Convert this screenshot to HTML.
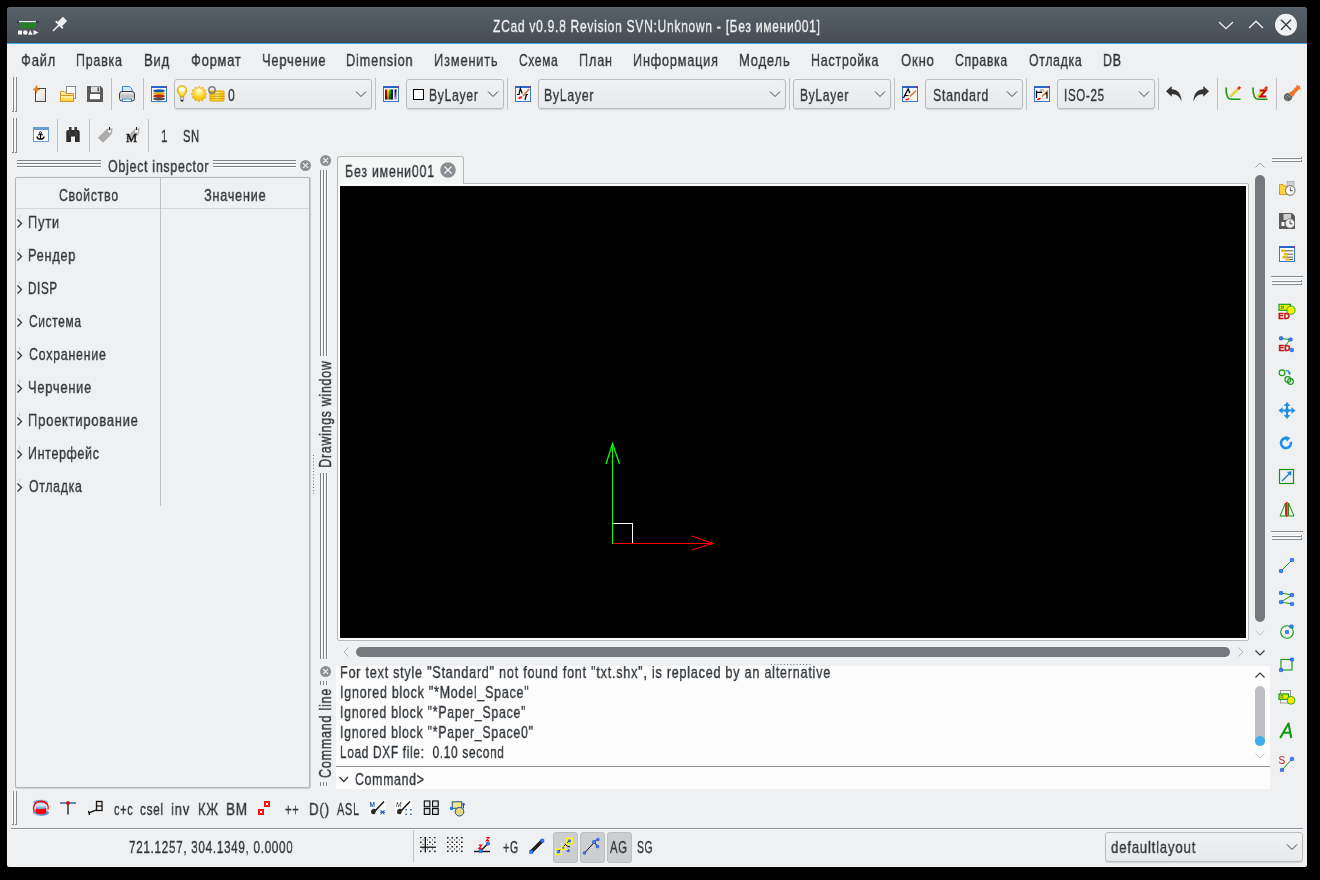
<!DOCTYPE html>
<html><head><meta charset="utf-8"><style>
html,body{margin:0;padding:0;background:#000;width:1320px;height:880px;overflow:hidden;position:relative}
.t{position:absolute;white-space:pre;font-family:"Liberation Sans",sans-serif;transform-origin:0 0;will-change:transform;-webkit-text-stroke:0.35px currentColor;letter-spacing:1px}
svg{overflow:visible;will-change:transform}
</style></head><body>
<div style="position:absolute;left:7px;top:7px;width:1300px;height:860px;background:#eff0f1;border-radius:4px 4px 2px 2px;"></div>
<div style="position:absolute;left:7px;top:7px;width:1300px;height:35px;background:#555e66;border-radius:4px 4px 0 0;"></div>
<div style="position:absolute;left:9px;top:7px;width:1296px;height:1px;background:#5c666d;"></div>
<div style="position:absolute;left:8px;top:8px;width:1298px;height:1px;background:#565f67;"></div>
<div style="position:absolute;left:8px;top:9px;width:1298px;height:1px;background:#565e66;"></div>
<div style="position:absolute;left:7px;top:10px;width:1300px;height:1px;background:#555e66;"></div>
<div style="position:absolute;left:7px;top:11px;width:1300px;height:1px;background:#555d65;"></div>
<div style="position:absolute;left:7px;top:12px;width:1300px;height:1px;background:#545d65;"></div>
<div style="position:absolute;left:7px;top:13px;width:1300px;height:1px;background:#545c64;"></div>
<div style="position:absolute;left:7px;top:14px;width:1300px;height:1px;background:#535c64;"></div>
<div style="position:absolute;left:7px;top:15px;width:1300px;height:1px;background:#535b63;"></div>
<div style="position:absolute;left:7px;top:16px;width:1300px;height:1px;background:#535b63;"></div>
<div style="position:absolute;left:7px;top:17px;width:1300px;height:1px;background:#525a62;"></div>
<div style="position:absolute;left:7px;top:18px;width:1300px;height:1px;background:#525a62;"></div>
<div style="position:absolute;left:7px;top:19px;width:1300px;height:1px;background:#515961;"></div>
<div style="position:absolute;left:7px;top:20px;width:1300px;height:1px;background:#515960;"></div>
<div style="position:absolute;left:7px;top:21px;width:1300px;height:1px;background:#505860;"></div>
<div style="position:absolute;left:7px;top:22px;width:1300px;height:1px;background:#50585f;"></div>
<div style="position:absolute;left:7px;top:23px;width:1300px;height:1px;background:#50575f;"></div>
<div style="position:absolute;left:7px;top:24px;width:1300px;height:1px;background:#4f575e;"></div>
<div style="position:absolute;left:7px;top:25px;width:1300px;height:1px;background:#4f565e;"></div>
<div style="position:absolute;left:7px;top:26px;width:1300px;height:1px;background:#4e565d;"></div>
<div style="position:absolute;left:7px;top:27px;width:1300px;height:1px;background:#4e555d;"></div>
<div style="position:absolute;left:7px;top:28px;width:1300px;height:1px;background:#4e555c;"></div>
<div style="position:absolute;left:7px;top:29px;width:1300px;height:1px;background:#4d545c;"></div>
<div style="position:absolute;left:7px;top:30px;width:1300px;height:1px;background:#4d545b;"></div>
<div style="position:absolute;left:7px;top:31px;width:1300px;height:1px;background:#4c535a;"></div>
<div style="position:absolute;left:7px;top:32px;width:1300px;height:1px;background:#4c535a;"></div>
<div style="position:absolute;left:7px;top:33px;width:1300px;height:1px;background:#4b5259;"></div>
<div style="position:absolute;left:7px;top:34px;width:1300px;height:1px;background:#4b5259;"></div>
<div style="position:absolute;left:7px;top:35px;width:1300px;height:1px;background:#4b5158;"></div>
<div style="position:absolute;left:7px;top:36px;width:1300px;height:1px;background:#4a5158;"></div>
<div style="position:absolute;left:7px;top:37px;width:1300px;height:1px;background:#4a5057;"></div>
<div style="position:absolute;left:7px;top:38px;width:1300px;height:1px;background:#495057;"></div>
<div style="position:absolute;left:7px;top:39px;width:1300px;height:1px;background:#494f56;"></div>
<div style="position:absolute;left:7px;top:40px;width:1300px;height:1px;background:#484f56;"></div>
<div style="position:absolute;left:7px;top:41px;width:1300px;height:1px;background:#484e55;"></div>
<div style="position:absolute;left:7px;top:42px;width:1300px;height:1px;background:#46494e;"></div>
<div style="position:absolute;left:7px;top:43px;width:1300px;height:1px;background:#3daee9;"></div>
<div style="position:absolute;left:12px;top:77px;width:1px;height:35px;background:#fcfcfc;"></div>
<div style="position:absolute;left:13px;top:77px;width:1px;height:35px;background:#868b90;"></div>
<div style="position:absolute;left:12px;top:111px;width:2px;height:1px;background:#868b90;"></div>
<div style="position:absolute;left:15px;top:77px;width:1px;height:35px;background:#fcfcfc;"></div>
<div style="position:absolute;left:16px;top:77px;width:1px;height:35px;background:#868b90;"></div>
<div style="position:absolute;left:15px;top:111px;width:2px;height:1px;background:#868b90;"></div>
<div style="position:absolute;left:111px;top:78px;width:1px;height:32px;background:#bfc1c3;"></div>
<div style="position:absolute;left:143px;top:78px;width:1px;height:32px;background:#bfc1c3;"></div>
<div style="position:absolute;left:174px;top:79px;width:198px;height:30px;box-sizing:border-box;border:1px solid #babcbe;border-radius:3px;background:linear-gradient(#f0f1f2,#e8e9ea);box-shadow:0 1px 1px rgba(0,0,0,0.12);"></div>
<svg style="position:absolute;left:355px;top:90px;" width="12" height="8" viewBox="0 0 12 8"><polyline points="1,1.5 6,6.5 11,1.5" fill="none" stroke="#3b4045" stroke-width="1"/></svg>
<div style="position:absolute;left:375px;top:78px;width:1px;height:32px;background:#bfc1c3;"></div>
<div style="position:absolute;left:406px;top:79px;width:98px;height:30px;box-sizing:border-box;border:1px solid #babcbe;border-radius:3px;background:linear-gradient(#f0f1f2,#e8e9ea);box-shadow:0 1px 1px rgba(0,0,0,0.12);"></div>
<svg style="position:absolute;left:487px;top:90px;" width="12" height="8" viewBox="0 0 12 8"><polyline points="1,1.5 6,6.5 11,1.5" fill="none" stroke="#3b4045" stroke-width="1"/></svg>
<div style="position:absolute;left:507px;top:78px;width:1px;height:32px;background:#bfc1c3;"></div>
<div style="position:absolute;left:538px;top:79px;width:248px;height:30px;box-sizing:border-box;border:1px solid #babcbe;border-radius:3px;background:linear-gradient(#f0f1f2,#e8e9ea);box-shadow:0 1px 1px rgba(0,0,0,0.12);"></div>
<svg style="position:absolute;left:769px;top:90px;" width="12" height="8" viewBox="0 0 12 8"><polyline points="1,1.5 6,6.5 11,1.5" fill="none" stroke="#3b4045" stroke-width="1"/></svg>
<div style="position:absolute;left:789px;top:78px;width:1px;height:32px;background:#bfc1c3;"></div>
<div style="position:absolute;left:793px;top:79px;width:98px;height:30px;box-sizing:border-box;border:1px solid #babcbe;border-radius:3px;background:linear-gradient(#f0f1f2,#e8e9ea);box-shadow:0 1px 1px rgba(0,0,0,0.12);"></div>
<svg style="position:absolute;left:874px;top:90px;" width="12" height="8" viewBox="0 0 12 8"><polyline points="1,1.5 6,6.5 11,1.5" fill="none" stroke="#3b4045" stroke-width="1"/></svg>
<div style="position:absolute;left:894px;top:78px;width:1px;height:32px;background:#bfc1c3;"></div>
<div style="position:absolute;left:925px;top:79px;width:98px;height:30px;box-sizing:border-box;border:1px solid #babcbe;border-radius:3px;background:linear-gradient(#f0f1f2,#e8e9ea);box-shadow:0 1px 1px rgba(0,0,0,0.12);"></div>
<svg style="position:absolute;left:1006px;top:90px;" width="12" height="8" viewBox="0 0 12 8"><polyline points="1,1.5 6,6.5 11,1.5" fill="none" stroke="#3b4045" stroke-width="1"/></svg>
<div style="position:absolute;left:1026px;top:78px;width:1px;height:32px;background:#bfc1c3;"></div>
<div style="position:absolute;left:1057px;top:79px;width:98px;height:30px;box-sizing:border-box;border:1px solid #babcbe;border-radius:3px;background:linear-gradient(#f0f1f2,#e8e9ea);box-shadow:0 1px 1px rgba(0,0,0,0.12);"></div>
<svg style="position:absolute;left:1138px;top:90px;" width="12" height="8" viewBox="0 0 12 8"><polyline points="1,1.5 6,6.5 11,1.5" fill="none" stroke="#3b4045" stroke-width="1"/></svg>
<div style="position:absolute;left:1158px;top:78px;width:1px;height:32px;background:#bfc1c3;"></div>
<div style="position:absolute;left:1217px;top:78px;width:1px;height:32px;background:#bfc1c3;"></div>
<div style="position:absolute;left:1276px;top:78px;width:1px;height:32px;background:#bfc1c3;"></div>
<div style="position:absolute;left:413px;top:89px;width:11px;height:11px;box-sizing:border-box;border:1.5px solid #000;background:#fff;"></div>
<div style="position:absolute;left:12px;top:118px;width:1px;height:35px;background:#fcfcfc;"></div>
<div style="position:absolute;left:13px;top:118px;width:1px;height:35px;background:#868b90;"></div>
<div style="position:absolute;left:12px;top:152px;width:2px;height:1px;background:#868b90;"></div>
<div style="position:absolute;left:15px;top:118px;width:1px;height:35px;background:#fcfcfc;"></div>
<div style="position:absolute;left:16px;top:118px;width:1px;height:35px;background:#868b90;"></div>
<div style="position:absolute;left:15px;top:152px;width:2px;height:1px;background:#868b90;"></div>
<div style="position:absolute;left:57px;top:119px;width:1px;height:33px;background:#bfc1c3;"></div>
<div style="position:absolute;left:89px;top:119px;width:1px;height:33px;background:#bfc1c3;"></div>
<div style="position:absolute;left:148px;top:119px;width:1px;height:33px;background:#bfc1c3;"></div>
<div style="position:absolute;left:17px;top:160px;width:84px;height:1px;background:#7e848a;"></div>
<div style="position:absolute;left:17px;top:161px;width:84px;height:1px;background:#fcfcfc;"></div>
<div style="position:absolute;left:17px;top:163px;width:84px;height:1px;background:#7e848a;"></div>
<div style="position:absolute;left:17px;top:164px;width:84px;height:1px;background:#fcfcfc;"></div>
<div style="position:absolute;left:17px;top:166px;width:84px;height:1px;background:#7e848a;"></div>
<div style="position:absolute;left:17px;top:167px;width:84px;height:1px;background:#fcfcfc;"></div>
<div style="position:absolute;left:213px;top:160px;width:83px;height:1px;background:#7e848a;"></div>
<div style="position:absolute;left:213px;top:161px;width:83px;height:1px;background:#fcfcfc;"></div>
<div style="position:absolute;left:213px;top:163px;width:83px;height:1px;background:#7e848a;"></div>
<div style="position:absolute;left:213px;top:164px;width:83px;height:1px;background:#fcfcfc;"></div>
<div style="position:absolute;left:213px;top:166px;width:83px;height:1px;background:#7e848a;"></div>
<div style="position:absolute;left:213px;top:167px;width:83px;height:1px;background:#fcfcfc;"></div>
<svg style="position:absolute;left:299px;top:159px;" width="14" height="14" viewBox="0 0 14 14"><g transform="translate(6.5,6.5)"><circle r="5.5" fill="#8e9194"/><path d="M-2.475,-2.475L2.475,2.475M2.475,-2.475L-2.475,2.475" stroke="#f4f5f5" stroke-width="1.1"/></g></svg>
<div style="position:absolute;left:15px;top:177px;width:295px;height:611px;box-sizing:border-box;border:1px solid #b3b5b7;border-radius:2px;background:#eff0f1;box-shadow:0.5px 0.5px 1px rgba(0,0,0,0.15);"></div>
<div style="position:absolute;left:16px;top:208px;width:293px;height:1px;background:#d5d7d9;"></div>
<div style="position:absolute;left:160px;top:178px;width:1px;height:328px;background:#bfc1c3;"></div>
<svg style="position:absolute;left:16px;top:217px;" width="8" height="12" viewBox="0 0 8 12"><polyline points="1.5,2.5 5.5,6.5 1.5,10.5" fill="none" stroke="#31363b" stroke-width="1.3"/></svg>
<div style="position:absolute;left:19px;top:215px;width:1px;height:3px;background:#c8cacc;"></div>
<svg style="position:absolute;left:16px;top:250px;" width="8" height="12" viewBox="0 0 8 12"><polyline points="1.5,2.5 5.5,6.5 1.5,10.5" fill="none" stroke="#31363b" stroke-width="1.3"/></svg>
<div style="position:absolute;left:19px;top:248px;width:1px;height:3px;background:#c8cacc;"></div>
<svg style="position:absolute;left:16px;top:283px;" width="8" height="12" viewBox="0 0 8 12"><polyline points="1.5,2.5 5.5,6.5 1.5,10.5" fill="none" stroke="#31363b" stroke-width="1.3"/></svg>
<div style="position:absolute;left:19px;top:281px;width:1px;height:3px;background:#c8cacc;"></div>
<svg style="position:absolute;left:16px;top:316px;" width="8" height="12" viewBox="0 0 8 12"><polyline points="1.5,2.5 5.5,6.5 1.5,10.5" fill="none" stroke="#31363b" stroke-width="1.3"/></svg>
<div style="position:absolute;left:19px;top:314px;width:1px;height:3px;background:#c8cacc;"></div>
<svg style="position:absolute;left:16px;top:349px;" width="8" height="12" viewBox="0 0 8 12"><polyline points="1.5,2.5 5.5,6.5 1.5,10.5" fill="none" stroke="#31363b" stroke-width="1.3"/></svg>
<div style="position:absolute;left:19px;top:347px;width:1px;height:3px;background:#c8cacc;"></div>
<svg style="position:absolute;left:16px;top:382px;" width="8" height="12" viewBox="0 0 8 12"><polyline points="1.5,2.5 5.5,6.5 1.5,10.5" fill="none" stroke="#31363b" stroke-width="1.3"/></svg>
<div style="position:absolute;left:19px;top:380px;width:1px;height:3px;background:#c8cacc;"></div>
<svg style="position:absolute;left:16px;top:415px;" width="8" height="12" viewBox="0 0 8 12"><polyline points="1.5,2.5 5.5,6.5 1.5,10.5" fill="none" stroke="#31363b" stroke-width="1.3"/></svg>
<div style="position:absolute;left:19px;top:413px;width:1px;height:3px;background:#c8cacc;"></div>
<svg style="position:absolute;left:16px;top:448px;" width="8" height="12" viewBox="0 0 8 12"><polyline points="1.5,2.5 5.5,6.5 1.5,10.5" fill="none" stroke="#31363b" stroke-width="1.3"/></svg>
<div style="position:absolute;left:19px;top:446px;width:1px;height:3px;background:#c8cacc;"></div>
<svg style="position:absolute;left:16px;top:481px;" width="8" height="12" viewBox="0 0 8 12"><polyline points="1.5,2.5 5.5,6.5 1.5,10.5" fill="none" stroke="#31363b" stroke-width="1.3"/></svg>
<div style="position:absolute;left:19px;top:479px;width:1px;height:3px;background:#c8cacc;"></div>
<svg style="position:absolute;left:319px;top:154px;" width="14" height="14" viewBox="0 0 14 14"><g transform="translate(6.600000000000023,6.5)"><circle r="5.5" fill="#8e9194"/><path d="M-2.475,-2.475L2.475,2.475M2.475,-2.475L-2.475,2.475" stroke="#f4f5f5" stroke-width="1.1"/></g></svg>
<div style="position:absolute;left:320px;top:170px;width:1px;height:186px;background:#7e848a;"></div>
<div style="position:absolute;left:321px;top:170px;width:1px;height:186px;background:#fcfcfc;"></div>
<div style="position:absolute;left:323px;top:170px;width:1px;height:186px;background:#7e848a;"></div>
<div style="position:absolute;left:324px;top:170px;width:1px;height:186px;background:#fcfcfc;"></div>
<div style="position:absolute;left:326px;top:170px;width:1px;height:186px;background:#7e848a;"></div>
<div style="position:absolute;left:327px;top:170px;width:1px;height:186px;background:#fcfcfc;"></div>
<div style="position:absolute;left:320px;top:473px;width:1px;height:186px;background:#7e848a;"></div>
<div style="position:absolute;left:321px;top:473px;width:1px;height:186px;background:#fcfcfc;"></div>
<div style="position:absolute;left:323px;top:473px;width:1px;height:186px;background:#7e848a;"></div>
<div style="position:absolute;left:324px;top:473px;width:1px;height:186px;background:#fcfcfc;"></div>
<div style="position:absolute;left:326px;top:473px;width:1px;height:186px;background:#7e848a;"></div>
<div style="position:absolute;left:327px;top:473px;width:1px;height:186px;background:#fcfcfc;"></div>
<svg style="position:absolute;left:312px;top:455px;" width="3" height="39" viewBox="0 0 3 39"><line x1="1.5" y1="0" x2="1.5" y2="39" stroke="#6d7277" stroke-width="1" stroke-dasharray="1,2.2"/></svg>
<div style="position:absolute;left:337px;top:183px;width:912px;height:458px;box-sizing:border-box;border:1px solid #b6b8ba;border-radius:0 2px 2px 2px;background:#fcfcfc;"></div>
<div style="position:absolute;left:337px;top:156px;width:127px;height:28px;box-sizing:border-box;border:1px solid #b6b8ba;border-bottom:none;border-radius:3px 3px 0 0;background:#f5f6f6;"></div>
<div style="position:absolute;left:340px;top:186px;width:906px;height:452px;background:#000;"></div>
<svg style="position:absolute;left:439px;top:161px;" width="18" height="18" viewBox="0 0 18 18"><g transform="translate(9,9)"><circle r="7.8" fill="#8a8d91"/><path d="M-3.51,-3.51L3.51,3.51M3.51,-3.51L-3.51,3.51" stroke="#f6f6f6" stroke-width="1.1"/></g></svg>
<svg style="position:absolute;left:600px;top:435px;" width="120" height="115" viewBox="0 0 120 115">
<g transform="translate(-600,-435)" fill="none" stroke-width="1.3" shape-rendering="crispEdges">
<line x1="612.5" y1="543.5" x2="612.5" y2="443.5" stroke="#00ff00"/>
<polyline points="606,464 612.5,443.5 619.5,464" stroke="#00ff00" shape-rendering="auto"/>
<line x1="612.5" y1="543.5" x2="712.5" y2="543.5" stroke="#ff0000"/>
<polyline points="692,536 712.5,543.5 692,550" stroke="#ff0000" shape-rendering="auto"/>
<polyline points="612.5,523.5 632.5,523.5 632.5,543" stroke="#ffffff"/>
</g></svg>
<svg style="position:absolute;left:1254px;top:161px;" width="12" height="8" viewBox="0 0 12 8"><polyline points="1.5,6.5 6,2 10.5,6.5" fill="none" stroke="#a3a6a9" stroke-width="1"/></svg>
<div style="position:absolute;left:1255px;top:175px;width:10px;height:447px;background:#75797e;border-radius:5px;"></div>
<svg style="position:absolute;left:1254px;top:629px;" width="12" height="8" viewBox="0 0 12 8"><polyline points="1.5,1.5 6,6 10.5,1.5" fill="none" stroke="#c5c7c9" stroke-width="1"/></svg>
<svg style="position:absolute;left:342px;top:646px;" width="8" height="12" viewBox="0 0 8 12"><polyline points="6.5,1.5 2,6 6.5,10.5" fill="none" stroke="#b3b5b8" stroke-width="1"/></svg>
<div style="position:absolute;left:356px;top:647px;width:874px;height:10px;background:#75797e;border-radius:5px;"></div>
<svg style="position:absolute;left:1237px;top:646px;" width="8" height="12" viewBox="0 0 8 12"><polyline points="1.5,1.5 6,6 1.5,10.5" fill="none" stroke="#b3b5b8" stroke-width="1"/></svg>
<svg style="position:absolute;left:1254px;top:649px;" width="12" height="8" viewBox="0 0 12 8"><polyline points="1.5,1.5 6,6 10.5,1.5" fill="none" stroke="#31363b" stroke-width="1.1"/></svg>
<svg style="position:absolute;left:319px;top:665px;" width="14" height="14" viewBox="0 0 14 14"><g transform="translate(6.600000000000023,6.5)"><circle r="5.5" fill="#8e9194"/><path d="M-2.475,-2.475L2.475,2.475M2.475,-2.475L-2.475,2.475" stroke="#f4f5f5" stroke-width="1.1"/></g></svg>
<div style="position:absolute;left:336px;top:666px;width:934px;height:123px;background:#fcfcfc;"></div>
<svg style="position:absolute;left:771px;top:663px;" width="40" height="3" viewBox="0 0 40 3"><line x1="0" y1="1.5" x2="40" y2="1.5" stroke="#6d7277" stroke-width="1" stroke-dasharray="1,2.2"/></svg>
<div style="position:absolute;left:336px;top:666px;width:934px;height:100px;overflow:hidden">
<div class="t" style="left:4.16px;top:-2.50px;font-size:17px;line-height:17px;color:#31363b;transform:scaleX(0.7440)">For text style "Standard" not found font "txt.shx", is replaced by an alternative</div>
<div class="t" style="left:4.16px;top:17.50px;font-size:17px;line-height:17px;color:#31363b;transform:scaleX(0.7355)">Ignored block "*Model_Space"</div>
<div class="t" style="left:4.17px;top:37.50px;font-size:17px;line-height:17px;color:#31363b;transform:scaleX(0.7258)">Ignored block "*Paper_Space"</div>
<div class="t" style="left:4.17px;top:57.50px;font-size:17px;line-height:17px;color:#31363b;transform:scaleX(0.7255)">Ignored block "*Paper_Space0"</div>
<div class="t" style="left:4.21px;top:77.50px;font-size:17px;line-height:17px;color:#31363b;transform:scaleX(0.6949)">Load DXF file:  0.10 second</div>
</div>
<div style="position:absolute;left:336px;top:766px;width:934px;height:1px;background:#8d9196;"></div>
<svg style="position:absolute;left:338px;top:775px;" width="12" height="9" viewBox="0 0 12 9"><polyline points="1.5,2 5.8,6.5 10,2" fill="none" stroke="#31363b" stroke-width="1.3"/></svg>
<svg style="position:absolute;left:1254px;top:671px;" width="12" height="9" viewBox="0 0 12 9"><polyline points="1.5,6.5 6,2 10.5,6.5" fill="none" stroke="#31363b" stroke-width="1.1"/></svg>
<div style="position:absolute;left:1255px;top:686px;width:10px;height:60px;background:#bdbfc2;border-radius:5px;"></div>
<div style="position:absolute;left:1255px;top:736px;width:10px;height:10px;background:#3daee9;border-radius:5px;"></div>
<svg style="position:absolute;left:1254px;top:752px;" width="12" height="8" viewBox="0 0 12 8"><polyline points="1.5,1.5 6,6 10.5,1.5" fill="none" stroke="#c5c7c9" stroke-width="1"/></svg>
<div style="position:absolute;left:320px;top:681px;width:1px;height:4px;background:#7e848a;"></div>
<div style="position:absolute;left:321px;top:681px;width:1px;height:4px;background:#fcfcfc;"></div>
<div style="position:absolute;left:323px;top:681px;width:1px;height:4px;background:#7e848a;"></div>
<div style="position:absolute;left:324px;top:681px;width:1px;height:4px;background:#fcfcfc;"></div>
<div style="position:absolute;left:326px;top:681px;width:1px;height:4px;background:#7e848a;"></div>
<div style="position:absolute;left:327px;top:681px;width:1px;height:4px;background:#fcfcfc;"></div>
<div style="position:absolute;left:320px;top:782px;width:1px;height:4px;background:#7e848a;"></div>
<div style="position:absolute;left:321px;top:782px;width:1px;height:4px;background:#fcfcfc;"></div>
<div style="position:absolute;left:323px;top:782px;width:1px;height:4px;background:#7e848a;"></div>
<div style="position:absolute;left:324px;top:782px;width:1px;height:4px;background:#fcfcfc;"></div>
<div style="position:absolute;left:326px;top:782px;width:1px;height:4px;background:#7e848a;"></div>
<div style="position:absolute;left:327px;top:782px;width:1px;height:4px;background:#fcfcfc;"></div>
<div style="position:absolute;left:1272px;top:157px;width:30px;height:1px;background:#fcfcfc;"></div>
<div style="position:absolute;left:1272px;top:158px;width:30px;height:1px;background:#868b90;"></div>
<div style="position:absolute;left:1301px;top:157px;width:1px;height:2px;background:#868b90;"></div>
<div style="position:absolute;left:1272px;top:160px;width:30px;height:1px;background:#fcfcfc;"></div>
<div style="position:absolute;left:1272px;top:161px;width:30px;height:1px;background:#868b90;"></div>
<div style="position:absolute;left:1301px;top:160px;width:1px;height:2px;background:#868b90;"></div>
<div style="position:absolute;left:1271px;top:276px;width:32px;height:1px;background:#868b90;"></div>
<div style="position:absolute;left:1271px;top:277px;width:32px;height:1px;background:#fcfcfc;"></div>
<div style="position:absolute;left:1272px;top:280px;width:30px;height:1px;background:#fcfcfc;"></div>
<div style="position:absolute;left:1272px;top:281px;width:30px;height:1px;background:#868b90;"></div>
<div style="position:absolute;left:1301px;top:280px;width:1px;height:2px;background:#868b90;"></div>
<div style="position:absolute;left:1272px;top:283px;width:30px;height:1px;background:#fcfcfc;"></div>
<div style="position:absolute;left:1272px;top:284px;width:30px;height:1px;background:#868b90;"></div>
<div style="position:absolute;left:1301px;top:283px;width:1px;height:2px;background:#868b90;"></div>
<div style="position:absolute;left:1271px;top:531px;width:32px;height:1px;background:#868b90;"></div>
<div style="position:absolute;left:1271px;top:532px;width:32px;height:1px;background:#fcfcfc;"></div>
<div style="position:absolute;left:1272px;top:535px;width:30px;height:1px;background:#fcfcfc;"></div>
<div style="position:absolute;left:1272px;top:536px;width:30px;height:1px;background:#868b90;"></div>
<div style="position:absolute;left:1301px;top:535px;width:1px;height:2px;background:#868b90;"></div>
<div style="position:absolute;left:1272px;top:538px;width:30px;height:1px;background:#fcfcfc;"></div>
<div style="position:absolute;left:1272px;top:539px;width:30px;height:1px;background:#868b90;"></div>
<div style="position:absolute;left:1301px;top:538px;width:1px;height:2px;background:#868b90;"></div>
<div style="position:absolute;left:12px;top:791px;width:1px;height:34px;background:#fcfcfc;"></div>
<div style="position:absolute;left:13px;top:791px;width:1px;height:34px;background:#868b90;"></div>
<div style="position:absolute;left:12px;top:824px;width:2px;height:1px;background:#868b90;"></div>
<div style="position:absolute;left:15px;top:791px;width:1px;height:34px;background:#fcfcfc;"></div>
<div style="position:absolute;left:16px;top:791px;width:1px;height:34px;background:#868b90;"></div>
<div style="position:absolute;left:15px;top:824px;width:2px;height:1px;background:#868b90;"></div>
<div style="position:absolute;left:11px;top:828px;width:1292px;height:1px;background:#8d9196;"></div>
<div style="position:absolute;left:11px;top:829px;width:1292px;height:1px;background:#fcfcfc;"></div>
<div style="position:absolute;left:413px;top:830px;width:1px;height:32px;background:#bfc1c3;"></div>
<div style="position:absolute;left:553px;top:832px;width:25px;height:31px;box-sizing:border-box;border:1px solid #bdbec0;border-radius:3px;background:#cdced0;"></div>
<div style="position:absolute;left:580px;top:832px;width:25px;height:31px;box-sizing:border-box;border:1px solid #bdbec0;border-radius:3px;background:#cdced0;"></div>
<div style="position:absolute;left:607px;top:832px;width:25px;height:31px;box-sizing:border-box;border:1px solid #bdbec0;border-radius:3px;background:#cdced0;"></div>
<div style="position:absolute;left:1105px;top:832px;width:198px;height:30px;box-sizing:border-box;border:1px solid #babcbe;border-radius:3px;background:linear-gradient(#f0f1f2,#e8e9ea);box-shadow:0 1px 1px rgba(0,0,0,0.12);"></div>
<svg style="position:absolute;left:1286px;top:843px;" width="12" height="8" viewBox="0 0 12 8"><polyline points="1,1.5 6,6.5 11,1.5" fill="none" stroke="#3b4045" stroke-width="1"/></svg>
<svg style="position:absolute;left:16px;top:19px" width="24" height="18" viewBox="0 0 24 18">
<rect x="3" y="2" width="17" height="1.2" fill="#f0f0f0"/>
<path d="M1,3.5 L3,2.5 M20,2.5 L23,3.5" stroke="#222" stroke-width="1"/>
<text x="12" y="8.8" font-family="Liberation Sans" font-weight="bold" font-size="7.2" fill="#1a8c1a" stroke="#1a8c1a" stroke-width="0.7" text-anchor="middle" textLength="16" lengthAdjust="spacingAndGlyphs">ZCAD</text>
<rect x="2" y="11.5" width="4" height="4" fill="#f4f4f4"/>
<circle cx="9.3" cy="13.5" r="2.3" fill="#f4f4f4"/>
<path d="M12,15.8 L14.3,11 L16.6,15.8Z" fill="#f4f4f4"/>
<path d="M17.5,11 L22.5,13.5 L17.5,16Z" fill="#f4f4f4"/>
</svg>
<svg style="position:absolute;left:50px;top:16px" width="18" height="18" viewBox="0 0 18 18">
<g transform="translate(9,9) rotate(45)">
<rect x="-3" y="-8.5" width="6" height="8" fill="#eff0f1"/>
<rect x="-5" y="-1.3" width="10" height="1.8" fill="#eff0f1"/>
<rect x="-0.8" y="0" width="1.6" height="8.5" fill="#eff0f1"/>
</g></svg>
<svg style="position:absolute;left:1216px;top:19px" width="20" height="12" viewBox="0 0 20 12"><polyline points="3,3 10,9.6 17,3" fill="none" stroke="#eff0f1" stroke-width="1.3"/></svg>
<svg style="position:absolute;left:1246px;top:17px" width="20" height="14" viewBox="0 0 20 14"><polyline points="3,11 10,4.2 17,11" fill="none" stroke="#eff0f1" stroke-width="1.3"/></svg>
<svg style="position:absolute;left:1274px;top:13px" width="24" height="24" viewBox="0 0 24 24"><circle cx="12" cy="11.8" r="11" fill="#eff0f1"/><path d="M7,6.8 L17,16.8 M17,6.8 L7,16.8" stroke="#31363b" stroke-width="1.3"/></svg>
<svg style="position:absolute;left:33px;top:84px" width="16" height="20" viewBox="0 0 16 20">
<defs><linearGradient id="gnew" x1="0" y1="0" x2="1" y2="1"><stop offset="0" stop-color="#fff"/><stop offset="1" stop-color="#dcdcdc"/></linearGradient></defs>
<rect x="2.5" y="4.5" width="10" height="13" fill="url(#gnew)" stroke="#4a4a4a" stroke-width="1"/>
<path d="M3.4,1.5 L4.3,4.3 L7,5.4 L4.3,6.5 L3.4,9.3 L2.5,6.5 L0,5.4 L2.5,4.3Z" fill="#f08a1c" stroke="#c85a00" stroke-width="0.5"/>
</svg>
<svg style="position:absolute;left:58px;top:84px" width="20" height="20" viewBox="0 0 20 20">
<defs><linearGradient id="gfold" x1="0" y1="0" x2="0" y2="1"><stop offset="0" stop-color="#fff7c0"/><stop offset="1" stop-color="#ffd020"/></linearGradient></defs>
<rect x="8.5" y="2.5" width="9" height="12" fill="#fff" stroke="#8c8c8c" stroke-width="1"/>
<path d="M2.5,17.5 L2.5,7.5 L6.5,7.5 L8,9.5 L15.5,9.5 L15.5,17.5Z" fill="url(#gfold)" stroke="#e0902a" stroke-width="1"/>
<rect x="2.5" y="11.5" width="13" height="6" fill="url(#gfold)" stroke="#e0902a" stroke-width="1"/>
</svg>
<svg style="position:absolute;left:87px;top:86px" width="16" height="16" viewBox="0 0 16 16">
<path d="M0,0 H13.5 L16,2.5 V16 H0Z" fill="#5a5a5a"/>
<rect x="4" y="0.6" width="9" height="5.6" fill="#e0e0e0"/>
<rect x="10.5" y="1.3" width="1.6" height="4" fill="#555"/>
<rect x="3" y="8" width="10" height="5.2" fill="#fff"/>
</svg>
<svg style="position:absolute;left:118px;top:84px" width="18" height="20" viewBox="0 0 18 20">
<defs><linearGradient id="gpr" x1="0" y1="0" x2="0" y2="1"><stop offset="0" stop-color="#f4f4f4"/><stop offset="0.5" stop-color="#bdbdbd"/><stop offset="1" stop-color="#f0f0f0"/></linearGradient></defs>
<path d="M4.5,2.5 H11.5 L14,5 V9 H4.5Z" fill="#d8e8fb" stroke="#3a85d8" stroke-width="1"/>
<rect x="1.5" y="7.5" width="15" height="9.5" rx="2.5" fill="url(#gpr)" stroke="#3c3c3c" stroke-width="1"/>
<rect x="4.5" y="15" width="9" height="2.5" fill="#fff" stroke="#3a85d8" stroke-width="1"/>
</svg>
<svg style="position:absolute;left:151px;top:86px" width="16" height="16" viewBox="0 0 16 16">
<rect x="0.5" y="0.5" width="15" height="15" fill="#f7f5f0" stroke="#3a78d4" stroke-width="1"/>
<rect x="0" y="0" width="16" height="2" fill="#2c66cc"/>
<rect x="14" y="0" width="2" height="2" fill="#8a3a8a"/>

<ellipse cx="8" cy="4.8" rx="6" ry="1.6" fill="#1155aa"/>
<ellipse cx="8" cy="7.5" rx="6" ry="1.6" fill="#e0a818"/>
<ellipse cx="8" cy="10.2" rx="6" ry="1.6" fill="#c02a0a"/>
<ellipse cx="8" cy="12.9" rx="6" ry="1.6" fill="#505050"/>
</svg>
<svg style="position:absolute;left:176px;top:85px" width="50" height="18" viewBox="0 0 50 18">
<defs><radialGradient id="gbulb" cx="0.5" cy="0.35" r="0.6"><stop offset="0" stop-color="#fffef0"/><stop offset="1" stop-color="#f5c400"/></radialGradient>
<radialGradient id="gsun" cx="0.5" cy="0.3" r="0.7"><stop offset="0" stop-color="#ffffe8"/><stop offset="0.6" stop-color="#ffd21a"/><stop offset="1" stop-color="#f0b000"/></radialGradient></defs>
<path d="M4.3,12 C4.3,9.8 1.2,8.3 1.2,5.2 C1.2,2.6 3.3,0.8 6,0.8 C8.7,0.8 10.8,2.6 10.8,5.2 C10.8,8.3 7.7,9.8 7.7,12Z" fill="url(#gbulb)" stroke="#d9a200" stroke-width="0.9"/>
<ellipse cx="6" cy="4.2" rx="3" ry="1.5" fill="#ffffff"/>
<rect x="4.2" y="12" width="3.6" height="3" fill="#d0d0d0" stroke="#808080" stroke-width="0.5"/>
<rect x="4.7" y="15" width="2.6" height="1.5" fill="#222"/>
<g transform="translate(23,9)">
<path d="M0,-7.8 L1.5,-5.6 L3.9,-6.8 L4.1,-4.1 L6.8,-3.9 L5.6,-1.5 L7.8,0 L5.6,1.5 L6.8,3.9 L4.1,4.1 L3.9,6.8 L1.5,5.6 L0,7.8 L-1.5,5.6 L-3.9,6.8 L-4.1,4.1 L-6.8,3.9 L-5.6,1.5 L-7.8,0 L-5.6,-1.5 L-6.8,-3.9 L-4.1,-4.1 L-3.9,-6.8 L-1.5,-5.6Z" fill="url(#gsun)" stroke="#dca000" stroke-width="0.7"/>
</g>
<rect x="34" y="6" width="14" height="10" rx="0.8" fill="#ffd21a" stroke="#d19a00" stroke-width="0.9"/>
<rect x="38.5" y="7" width="5" height="8" fill="#fff0a0" opacity="0.6"/>
<path d="M34.5,9 H47.5 M34.5,11.3 H47.5 M34.5,13.6 H47.5" stroke="#c89200" stroke-width="0.8"/>
<circle cx="36" cy="5" r="3.2" fill="none" stroke="#808080" stroke-width="1.5"/>
</svg>
<svg style="position:absolute;left:383px;top:86px" width="16" height="16" viewBox="0 0 16 16">
<rect x="0.5" y="0.5" width="15" height="15" fill="#f7f5f0" stroke="#3a78d4" stroke-width="1"/>
<rect x="0" y="0" width="16" height="2" fill="#2c66cc"/>
<rect x="14" y="0" width="2" height="2" fill="#8a3a8a"/>

<defs><linearGradient id="gcr" x1="0" y1="0" x2="0" y2="1"><stop offset="0" stop-color="#ff0000"/><stop offset="1" stop-color="#600000"/></linearGradient>
<linearGradient id="gcy" x1="0" y1="0" x2="0" y2="1"><stop offset="0" stop-color="#ffff00"/><stop offset="1" stop-color="#707000"/></linearGradient>
<linearGradient id="gcg" x1="0" y1="0" x2="0" y2="1"><stop offset="0" stop-color="#00d000"/><stop offset="1" stop-color="#005000"/></linearGradient>
<linearGradient id="gcb" x1="0" y1="0" x2="0" y2="1"><stop offset="0" stop-color="#0000ff"/><stop offset="1" stop-color="#000060"/></linearGradient>
<linearGradient id="gck" x1="0" y1="0" x2="0" y2="1"><stop offset="0" stop-color="#000"/><stop offset="1" stop-color="#999"/></linearGradient></defs>
<rect x="2" y="3.5" width="2" height="10" fill="url(#gcr)"/>
<rect x="4" y="3.5" width="2" height="10" fill="url(#gcy)"/>
<rect x="6" y="3.5" width="2" height="10" fill="url(#gcg)"/>
<rect x="8" y="3.5" width="2" height="10" fill="url(#gcb)"/>
<rect x="10" y="3.5" width="1.5" height="10" fill="#f4f4f4"/>
<rect x="11.5" y="3.5" width="2" height="10" fill="url(#gck)"/></svg>
<svg style="position:absolute;left:515px;top:86px" width="16" height="16" viewBox="0 0 16 16">
<rect x="0.5" y="0.5" width="15" height="15" fill="#f7f5f0" stroke="#3a78d4" stroke-width="1"/>
<rect x="0" y="0" width="16" height="2" fill="#2c66cc"/>
<rect x="14" y="0" width="2" height="2" fill="#8a3a8a"/>

<path d="M2,8.5 H4 L5.3,2.5 L7.3,7.5" fill="none" stroke="#000" stroke-width="1.2"/>
<path d="M10.5,8.5 H13 M11.5,8.5 L10,14" fill="none" stroke="#000" stroke-width="1.2"/>
<line x1="8" y1="10" x2="14.2" y2="3" stroke="#d27a3a" stroke-width="1.6"/>
<path d="M3,12.8 C4.5,10.5 6,10 7.5,10.6 C6.5,12.3 5,13.3 3,12.8Z" fill="#ff0000"/>
</svg>
<svg style="position:absolute;left:902px;top:86px" width="16" height="16" viewBox="0 0 16 16">
<rect x="0.5" y="0.5" width="15" height="15" fill="#f7f5f0" stroke="#3a78d4" stroke-width="1"/>
<rect x="0" y="0" width="16" height="2" fill="#2c66cc"/>
<rect x="14" y="0" width="2" height="2" fill="#8a3a8a"/>

<path d="M1.5,12 L6.2,2.8 L7.7,7" fill="none" stroke="#000" stroke-width="1.3"/>
<line x1="2.8" y1="9.6" x2="6.5" y2="9.6" stroke="#000" stroke-width="1"/>
<line x1="8" y1="10.5" x2="14" y2="4.5" stroke="#d27a3a" stroke-width="1.6"/>
<path d="M3,14.3 C4.5,12.3 6,11.8 7.6,12.4 C6.5,14 5,14.6 3,14.3Z" fill="#ff0000"/>
</svg>
<svg style="position:absolute;left:1034px;top:86px" width="16" height="16" viewBox="0 0 16 16">
<rect x="0.5" y="0.5" width="15" height="15" fill="#f7f5f0" stroke="#3a78d4" stroke-width="1"/>
<rect x="0" y="0" width="16" height="2" fill="#2c66cc"/>
<rect x="14" y="0" width="2" height="2" fill="#8a3a8a"/>

<path d="M2,6.3 H8 M2.5,4.5 L2.5,12" fill="none" stroke="#000" stroke-width="1.2"/>
<text x="6" y="5.8" font-size="4" font-family="Liberation Sans" fill="#555">65</text>
<line x1="8" y1="10.5" x2="14" y2="4.5" stroke="#d27a3a" stroke-width="1.6"/>
<path d="M13,7 L11.5,8 M13,6 V12.5" fill="none" stroke="#000" stroke-width="1.2"/>
<path d="M2.5,14.2 C4,12.2 5.5,11.8 7.2,12.3 C6,13.8 4.5,14.5 2.5,14.2Z" fill="#ff0000"/>
</svg>
<svg style="position:absolute;left:1164px;top:84px" width="20" height="20" viewBox="0 0 20 20">
<path d="M2,7.3 L7.7,2 V5.2 C13,5.2 17.5,9 17.5,17.7 C15.5,12 12.5,10.3 7.7,10.3 V12.8Z" fill="#333"/>
</svg>
<svg style="position:absolute;left:1191px;top:84px" width="20" height="20" viewBox="0 0 20 20">
<path d="M18,7.3 L12.3,2 V5.2 C7,5.2 2.5,9 2.5,17.7 C4.5,12 7.5,10.3 12.3,10.3 V12.8Z" fill="#333"/>
</svg>
<svg style="position:absolute;left:1224px;top:84px" width="20" height="20" viewBox="0 0 20 20">
<path d="M2,3.4 C2,10 3,14.8 7,15.3 H16.5" fill="none" stroke="#119911" stroke-width="1.6"/>
<line x1="6.5" y1="12.5" x2="14.8" y2="4.3" stroke="#d8d838" stroke-width="2.6"/>
<line x1="14" y1="5" x2="16.2" y2="2.8" stroke="#dd3030" stroke-width="2.6"/>
<path d="M5.3,13.8 L6,11.5 L7.6,13Z" fill="#e8c0a0"/>
</svg>
<svg style="position:absolute;left:1251px;top:84px" width="20" height="20" viewBox="0 0 20 20">
<path d="M2,3.4 C2,10 3,14.8 7,15.3 H16.5" fill="none" stroke="#119911" stroke-width="1.6"/>
<line x1="6.5" y1="12.5" x2="14.8" y2="4.3" stroke="#d8d838" stroke-width="2.6"/>
<line x1="14" y1="5" x2="16.2" y2="2.8" stroke="#dd3030" stroke-width="2.6"/>
<path d="M5.3,13.8 L6,11.5 L7.6,13Z" fill="#e8c0a0"/>
<path d="M8.6,6.6 H14.5 L9.3,12.6 H15.2" fill="none" stroke="#d40000" stroke-width="2"/></svg>
<svg style="position:absolute;left:1283px;top:85px" width="18" height="18" viewBox="0 0 18 18">
<path d="M0.8,12 C1,9.5 3,8 5,7.8 L9.5,11.8 C9.2,14 7.5,16.2 5,16.3 C3,16.3 0.7,14.5 0.8,12Z" fill="#5f6466"/>
<path d="M2,11 L4,13 M3.5,9.5 L6,12 M2.5,13.5 L5,15.5 M6,10.5 L8,13" stroke="#9aa0a3" stroke-width="0.8"/>
<path d="M5.5,8 C7,7 8.5,6.5 9.8,5.5 L12.5,2.8 C13,1.5 14.5,0.8 16.3,0.6 L17.2,1.5 C17,3.3 16.3,4.8 15,5.3 L12.3,8 C11.5,9.3 11,10.8 10,12 Z" fill="#f07428"/>
<path d="M13,1 L15,0 M17,3 L18,5 M11,4 L12,2.5" stroke="#f07428" stroke-width="0.8"/>
</svg>
<svg style="position:absolute;left:33px;top:127px" width="16" height="15" viewBox="0 0 16 15">
<rect x="0.5" y="0.5" width="15" height="14" fill="#fbfbfb" stroke="#6c9bd2" stroke-width="1"/>
<rect x="0" y="0" width="16" height="3" fill="#6c9bd2"/>
<circle cx="7.5" cy="5.8" r="1.1" fill="none" stroke="#000" stroke-width="0.9"/>
<path d="M7.5,6.8 V12.2 M5,7.8 H10 M3.8,9.5 C4.5,11.8 6,12.3 7.5,12.3 C9,12.3 10.5,11.8 11.2,9.5" fill="none" stroke="#000" stroke-width="1.1"/>
</svg>
<svg style="position:absolute;left:66px;top:127px" width="14" height="15" viewBox="0 0 14 15">
<rect x="3" y="0" width="2.6" height="4" fill="#3a3b38"/>
<rect x="8.4" y="0" width="2.6" height="4" fill="#3a3b38"/>
<path d="M0.3,5 Q0.3,3 2,3 H12 Q13.7,3 13.7,5 V15 H9 V9.5 H5 V15 H0.3Z" fill="#2f302d"/>
<path d="M4,4 V9 M10,4 V9" stroke="#555" stroke-width="0.8"/>
</svg>
<svg style="position:absolute;left:97px;top:127px" width="17" height="16" viewBox="0 0 17 16">
<path d="M1,10.8 L10,1.8 L15.5,1.2 L15,6.8 L6,15.7Z" fill="#ababab"/>
<circle cx="12.5" cy="4.2" r="1.5" fill="#fff"/>
<path d="M12.5,0 V3" stroke="#222" stroke-width="1"/>
</svg>
<svg style="position:absolute;left:124px;top:127px" width="17" height="16" viewBox="0 0 17 16">
<path d="M2,10.8 L11,1.8 L15.5,1.2 L15,6.8 L7,15Z" fill="#b0b0b0"/>
<circle cx="12.5" cy="4.2" r="1.5" fill="#fff"/>
<path d="M12.5,0 V3" stroke="#222" stroke-width="1"/>
<text x="7.5" y="14.8" font-family="Liberation Serif" font-size="12.5" fill="#111" stroke="#111" stroke-width="0.3" text-anchor="middle">M</text>
</svg>
<svg style="position:absolute;left:1279px;top:181px" width="17" height="15" viewBox="0 0 17 15">
<path d="M0.5,13.5 V3.5 H4 L5,5 H8.5 V13.5Z" fill="#ffd23a" stroke="#e39020" stroke-width="1"/>
<rect x="8" y="0.5" width="7" height="7" fill="#d0d0d0" stroke="#aaa" stroke-width="0.8"/>
<circle cx="11.3" cy="9.5" r="4.8" fill="#fff" stroke="#666" stroke-width="1"/>
<path d="M11.3,6.5 V9.8 H13.8" fill="none" stroke="#333" stroke-width="0.9"/>
</svg>
<svg style="position:absolute;left:1279px;top:213px" width="16" height="16" viewBox="0 0 16 16">
<path d="M0,0 H13 L16,3 V16 H0Z" fill="#5b5b5b"/>
<rect x="4.5" y="1" width="7.5" height="6" fill="#cfcfcf"/>
<rect x="2.5" y="9" width="3" height="4" fill="#fff"/>
<circle cx="11" cy="10.5" r="4.7" fill="#f0f0f0" stroke="#666" stroke-width="0.8"/>
<path d="M11,7.5 V10.8 H13.5" fill="none" stroke="#333" stroke-width="0.9"/>
</svg>
<svg style="position:absolute;left:1279px;top:246px" width="16" height="16" viewBox="0 0 16 16">
<rect x="0.5" y="0.5" width="15" height="15" fill="#fafafa" stroke="#3a78d4" stroke-width="1"/>
<rect x="0" y="0" width="16" height="2" fill="#2c66cc"/>
<rect x="14" y="0" width="2" height="2" fill="#8a3a8a"/>

<g fill="#f0b800"><rect x="2" y="3.5" width="4" height="2.5"/><rect x="5" y="7" width="4" height="2.5"/><rect x="3.5" y="10" width="4" height="2.5"/><rect x="6.5" y="12.5" width="4" height="2"/></g>
<g stroke="#555" stroke-width="1"><line x1="6" y1="4.8" x2="14" y2="4.8"/><line x1="9" y1="8.2" x2="14" y2="8.2"/><line x1="7.5" y1="11.2" x2="14" y2="11.2"/><line x1="10.5" y1="13.5" x2="14" y2="13.5"/></g>
</svg>
<svg style="position:absolute;left:1278px;top:303px" width="18" height="17" viewBox="0 0 18 17">
<rect x="1" y="1.3" width="11.5" height="6" fill="#f2f200" stroke="#119911" stroke-width="1.1"/>
<rect x="3.3" y="3.2" width="2" height="2" fill="none" stroke="#119911" stroke-width="0.8"/>
<circle cx="13" cy="7.2" r="4.1" fill="#f2f200" stroke="#119911" stroke-width="0.8"/>
<text x="0.3" y="16.3" font-family="Liberation Sans" font-weight="bold" font-size="8.6" fill="#c41818" stroke="#c41818" stroke-width="0.4" textLength="11.5" lengthAdjust="spacingAndGlyphs">ED</text>
</svg>
<svg style="position:absolute;left:1278px;top:336px" width="18" height="17" viewBox="0 0 18 17">
<path d="M3,2.5 L12,3.5 L8,9" fill="none" stroke="#119911" stroke-width="1"/>
<rect x="1.4000000000000001" y="0.7" width="3.1999999999999997" height="3.1999999999999997" fill="#2a8cff" stroke="#1a3fd0" stroke-width="0.6" rx="0.6"/><rect x="10.9" y="1.9000000000000001" width="3.1999999999999997" height="3.1999999999999997" fill="#2a8cff" stroke="#1a3fd0" stroke-width="0.6" rx="0.6"/><rect x="12.200000000000001" y="12.4" width="3.1999999999999997" height="3.1999999999999997" fill="#2a8cff" stroke="#1a3fd0" stroke-width="0.6" rx="0.6"/>
<text x="0.5" y="14.6" font-family="Liberation Sans" font-weight="bold" font-size="8.5" fill="#c41818" stroke="#c41818" stroke-width="0.4">ED</text>
</svg>
<svg style="position:absolute;left:1278px;top:369px" width="18" height="17" viewBox="0 0 18 17">
<circle cx="4" cy="3.8" r="2.9" fill="none" stroke="#119911" stroke-width="1.1"/>
<circle cx="9.8" cy="10.5" r="2.9" fill="none" stroke="#119911" stroke-width="1.1"/>
<circle cx="12.5" cy="12.5" r="2.9" fill="none" stroke="#119911" stroke-width="1.1"/>
<path d="M7.8,1.8 C10,1.3 11.2,2.3 11.5,4.3" fill="none" stroke="#1f7fe0" stroke-width="1.3"/>
<path d="M9.8,3.8 L11.6,6 L13.2,3.8Z" fill="#1f7fe0"/>
</svg>
<svg style="position:absolute;left:1278px;top:402px" width="18" height="17" viewBox="0 0 18 17">
<g fill="#1f8fe8"><path d="M9,0 L12.3,4 H5.7Z"/><path d="M9,17 L12.3,13 H5.7Z"/><path d="M0.5,8.5 L4.5,5.2 V11.8Z"/><path d="M17.5,8.5 L13.5,5.2 V11.8Z"/>
<rect x="8" y="3" width="2" height="11"/><rect x="3" y="7.5" width="12" height="2"/><circle cx="9" cy="8.5" r="2.2"/></g>
</svg>
<svg style="position:absolute;left:1278px;top:435px" width="18" height="17" viewBox="0 0 18 17">
<path d="M12.8,6.8 A5,5 0 1 1 9,3.2" fill="none" stroke="#1f8fe8" stroke-width="2.6"/>
<path d="M7.5,0.8 L12.5,3 L8.5,6.8Z" fill="#1f8fe8"/>
</svg>
<svg style="position:absolute;left:1278px;top:468px" width="18" height="17" viewBox="0 0 18 17">
<rect x="1.5" y="1.5" width="14" height="14" fill="none" stroke="#119911" stroke-width="1.2"/>
<line x1="4" y1="13" x2="12.5" y2="4.5" stroke="#1f7fe0" stroke-width="1.4"/>
<path d="M13.5,3.3 L13,8 L9,4Z" fill="#1f7fe0"/>
</svg>
<svg style="position:absolute;left:1278px;top:501px" width="18" height="17" viewBox="0 0 18 17">
<path d="M7.5,2 L2,15 H7.5Z M10.5,2 L16,15 H10.5Z" fill="none" stroke="#119911" stroke-width="1"/>
<line x1="8.5" y1="1" x2="8.5" y2="16" stroke="#dd2222" stroke-width="1"/>
<line x1="9.6" y1="1" x2="9.6" y2="16" stroke="#dd2222" stroke-width="0.8"/>
</svg>
<svg style="position:absolute;left:1278px;top:557px" width="18" height="17" viewBox="0 0 18 17"><line x1="3" y1="14" x2="14" y2="3" stroke="#119911" stroke-width="1"/><rect x="1.4000000000000001" y="12.4" width="3.1999999999999997" height="3.1999999999999997" fill="#2a8cff" stroke="#1a3fd0" stroke-width="0.6" rx="0.6"/><rect x="12.4" y="1.4000000000000001" width="3.1999999999999997" height="3.1999999999999997" fill="#2a8cff" stroke="#1a3fd0" stroke-width="0.6" rx="0.6"/></svg>
<svg style="position:absolute;left:1278px;top:590px" width="18" height="17" viewBox="0 0 18 17"><path d="M3,3 L14,5 L3,12 L14,14" fill="none" stroke="#119911" stroke-width="1"/><rect x="1.4000000000000001" y="1.4000000000000001" width="3.1999999999999997" height="3.1999999999999997" fill="#2a8cff" stroke="#1a3fd0" stroke-width="0.6" rx="0.6"/><rect x="12.4" y="3.4" width="3.1999999999999997" height="3.1999999999999997" fill="#2a8cff" stroke="#1a3fd0" stroke-width="0.6" rx="0.6"/><rect x="1.4000000000000001" y="10.4" width="3.1999999999999997" height="3.1999999999999997" fill="#2a8cff" stroke="#1a3fd0" stroke-width="0.6" rx="0.6"/><rect x="12.4" y="12.4" width="3.1999999999999997" height="3.1999999999999997" fill="#2a8cff" stroke="#1a3fd0" stroke-width="0.6" rx="0.6"/></svg>
<svg style="position:absolute;left:1278px;top:623px" width="18" height="17" viewBox="0 0 18 17"><circle cx="9" cy="9" r="6.3" fill="none" stroke="#119911" stroke-width="1.1"/><rect x="7.3999999999999995" y="7.3999999999999995" width="3.1999999999999997" height="3.1999999999999997" fill="#2a8cff" stroke="#1a3fd0" stroke-width="0.6" rx="0.6"/><rect x="11.9" y="1.9000000000000001" width="3.1999999999999997" height="3.1999999999999997" fill="#2a8cff" stroke="#1a3fd0" stroke-width="0.6" rx="0.6"/></svg>
<svg style="position:absolute;left:1278px;top:656px" width="18" height="17" viewBox="0 0 18 17"><rect x="3" y="3.5" width="11" height="10.5" fill="none" stroke="#119911" stroke-width="1.1"/><rect x="1.4000000000000001" y="12.4" width="3.1999999999999997" height="3.1999999999999997" fill="#2a8cff" stroke="#1a3fd0" stroke-width="0.6" rx="0.6"/><rect x="12.4" y="1.9000000000000001" width="3.1999999999999997" height="3.1999999999999997" fill="#2a8cff" stroke="#1a3fd0" stroke-width="0.6" rx="0.6"/></svg>
<svg style="position:absolute;left:1278px;top:689px" width="18" height="17" viewBox="0 0 18 17">
<rect x="2.5" y="1.5" width="10" height="12.5" fill="#f6f6f6" stroke="#9a9a9a" stroke-width="1"/>
<rect x="1" y="5" width="9.5" height="5.3" fill="#f2f200" stroke="#119911" stroke-width="1.2"/>
<rect x="3" y="6.6" width="2" height="2" fill="none" stroke="#119911" stroke-width="0.7"/>
<circle cx="13" cy="11.3" r="3.9" fill="#f2f200" stroke="#119911" stroke-width="0.8"/>
</svg>
<svg style="position:absolute;left:1278px;top:722px" width="18" height="17" viewBox="0 0 18 17"><path d="M2.2,16 L10.5,1.5 L13.3,16 M5.5,10.8 H12.3" fill="none" stroke="#119911" stroke-width="2.1" stroke-linejoin="round"/></svg>
<svg style="position:absolute;left:1278px;top:755px" width="18" height="17" viewBox="0 0 18 17"><text x="0.5" y="9" font-family="Liberation Sans" font-size="10" fill="#c41818">S</text><line x1="4" y1="15" x2="14" y2="4" stroke="#119911" stroke-width="1"/><rect x="2.4" y="13.4" width="3.1999999999999997" height="3.1999999999999997" fill="#2a8cff" stroke="#1a3fd0" stroke-width="0.6" rx="0.6"/><rect x="12.4" y="2.4" width="3.1999999999999997" height="3.1999999999999997" fill="#2a8cff" stroke="#1a3fd0" stroke-width="0.6" rx="0.6"/></svg>
<svg style="position:absolute;left:32px;top:799px" width="18" height="18" viewBox="0 0 18 18">
<defs><linearGradient id="ghat" x1="0" y1="0" x2="0" y2="1"><stop offset="0" stop-color="#e8f0f8"/><stop offset="0.6" stop-color="#3f86d8"/><stop offset="1" stop-color="#2050a0"/></linearGradient>
<linearGradient id="gbrim" x1="0" y1="0" x2="1" y2="1"><stop offset="0" stop-color="#3a7cc8"/><stop offset="0.5" stop-color="#8ab8e8"/><stop offset="1" stop-color="#1f5fb0"/></linearGradient></defs>
<ellipse cx="9" cy="13.5" rx="8" ry="3.3" fill="url(#gbrim)"/>
<ellipse cx="8.5" cy="3.2" rx="7.5" ry="2.4" fill="#7fb0e0"/>
<path d="M4,5.5 H14 V13 C14,15.5 4,15.5 4,13Z" fill="url(#ghat)"/>
<path d="M3.8,9.5 C6,10.5 12,10.5 14.2,9 V13.5 C14,15.8 4,15.8 3.8,13.5Z" fill="#ff0000"/>
<ellipse cx="9" cy="5.5" rx="5.2" ry="1.6" fill="#d8e4ee"/>
<path d="M2.2,12.5 C0.5,8 2,2.8 8.5,2.3 C15,2.5 17,6.5 16,10.5" fill="none" stroke="#ff0000" stroke-width="1.4"/>
</svg>
<svg style="position:absolute;left:59px;top:800px" width="18" height="16" viewBox="0 0 18 16"><line x1="1" y1="3" x2="17" y2="3" stroke="#3f5f9f" stroke-width="1.5"/><line x1="9" y1="3" x2="9" y2="14.5" stroke="#111" stroke-width="1.3"/><circle cx="9" cy="3" r="1.9" fill="#b81a0a"/></svg>
<svg style="position:absolute;left:86px;top:800px" width="17" height="17" viewBox="0 0 17 17"><rect x="10.5" y="1.5" width="5.5" height="9" fill="#f8f4ec" stroke="#111" stroke-width="1.3"/><line x1="10.5" y1="6" x2="16" y2="6" stroke="#111" stroke-width="1.2"/><path d="M10.5,9.8 L3,12.8 M2.5,10.8 L3.5,15" fill="none" stroke="#111" stroke-width="1.3"/></svg>
<svg style="position:absolute;left:257px;top:800px" width="16" height="16" viewBox="0 0 16 16">
<rect x="7" y="1" width="6" height="6" fill="#ff0000"/><path d="M8.6,2.6 L11.4,5.4 M11.4,2.6 L8.6,5.4" stroke="#fff" stroke-width="1" fill="none"/>
<rect x="1" y="9" width="6" height="6" fill="#ff0000"/><path d="M2.6,10.6 L5.4,13.4 M5.4,10.6 L2.6,13.4" stroke="#fff" stroke-width="1" fill="none"/>
</svg>
<svg style="position:absolute;left:369px;top:800px" width="17" height="16" viewBox="0 0 17 16">
<rect x="0" y="0" width="17" height="16" fill="#fafafa"/>
<text x="0.5" y="6.5" font-family="Liberation Sans" font-weight="bold" font-size="6.5" fill="#1f5fb0">M</text>
<line x1="6" y1="11" x2="15" y2="1.5" stroke="#111" stroke-width="1.4"/>
<path d="M2,12 C2,9 5,8 7.5,9.5 L6,14 C4,14.5 2,14 2,12Z" fill="#2a2a2a"/>
<path d="M11.5,10 L15.5,14.5 M15.5,10 L11.5,14.5 M10.8,12.2 H16.2" stroke="#1f5fb0" stroke-width="1.1"/>
</svg>
<svg style="position:absolute;left:395px;top:800px" width="18" height="16" viewBox="0 0 18 16">
<rect x="0" y="0" width="17" height="16" fill="#fafafa"/>
<text x="1" y="6.5" font-family="Liberation Sans" font-style="italic" font-size="6.5" fill="#333">M</text>
<line x1="6" y1="11" x2="15" y2="1.5" stroke="#111" stroke-width="1.4"/>
<path d="M2,12 C2,9 5,8 7.5,9.5 L6,14 C4,14.5 2,14 2,12Z" fill="#2a2a2a"/>
<path d="M11,10.5 V9.5 H12 M15,9.5 H16 V10.5 M16,13.5 V14.5 H15 M12,14.5 H11 V13.5" fill="none" stroke="#1f5fb0" stroke-width="1.2"/>
</svg>
<svg style="position:absolute;left:423px;top:800px" width="16" height="16" viewBox="0 0 16 16">
<defs><linearGradient id="gq" x1="0" y1="0" x2="1" y2="1"><stop offset="0" stop-color="#fff"/><stop offset="1" stop-color="#b8cde0"/></linearGradient></defs>
<g fill="url(#gq)" stroke="#000" stroke-width="1.1"><rect x="1.3" y="1" width="5.6" height="5.8"/><rect x="9.6" y="1" width="5.6" height="5.8"/><rect x="1.3" y="8.6" width="5.6" height="5.8"/><rect x="9.6" y="8.6" width="5.6" height="5.8"/></g></svg>
<svg style="position:absolute;left:449px;top:800px" width="18" height="17" viewBox="0 0 18 17">
<rect x="3.2" y="1.8" width="9.6" height="6.5" fill="#f0e68c" stroke="#1f4f8f" stroke-width="1"/>
<circle cx="10.5" cy="11.7" r="4.3" fill="#e6d880" stroke="#1f4f8f" stroke-width="1"/>
<rect x="1" y="7" width="3" height="3" fill="#1f7fe0"/>
<path d="M14.5,8.5 V3.5 M13,5 L14.5,3 L16,5" fill="none" stroke="#1f4f8f" stroke-width="1"/>
</svg>
<svg style="position:absolute;left:420px;top:837px" width="18" height="17" viewBox="0 0 18 17">
<g fill="#222">
<rect x="0" y="0" width="1.6" height="1.2"/><rect x="4.5" y="0" width="1.6" height="1.2"/><rect x="9" y="0" width="1.6" height="1.2"/><rect x="14" y="0" width="1.6" height="1.2"/>
<rect x="0" y="4.5" width="1.6" height="1.6"/><rect x="9" y="4.5" width="1.6" height="1.6"/><rect x="14" y="4.5" width="1.6" height="1.6"/>
<rect x="0" y="13.5" width="1.6" height="1.6"/><rect x="9" y="13.5" width="1.6" height="1.6"/><rect x="14" y="13.5" width="1.6" height="1.6"/>
<rect x="2.5" y="2.5" width="1" height="1"/><rect x="7" y="2.5" width="1" height="1"/><rect x="12" y="2.5" width="1" height="1"/>
<rect x="2.5" y="7" width="1" height="1"/><rect x="7" y="7" width="1" height="1"/><rect x="12" y="7" width="1" height="1"/>
<rect x="2.5" y="11.5" width="1" height="1"/><rect x="7" y="11.5" width="1" height="1"/><rect x="12" y="11.5" width="1" height="1"/>
</g>
<line x1="5.3" y1="0" x2="5.3" y2="15.5" stroke="#111" stroke-width="1.3"/><line x1="0" y1="10.2" x2="16" y2="10.2" stroke="#111" stroke-width="1.3"/>
</svg>
<svg style="position:absolute;left:447px;top:837px" width="18" height="17" viewBox="0 0 18 17">
<g fill="#222">
<rect x="0" y="0" width="1.6" height="1.5"/><rect x="0" y="4.5" width="1.6" height="1.5"/><rect x="0" y="9" width="1.6" height="1.5"/><rect x="0" y="13.5" width="1.6" height="1.5"/><rect x="4.5" y="0" width="1.6" height="1.5"/><rect x="4.5" y="4.5" width="1.6" height="1.5"/><rect x="4.5" y="9" width="1.6" height="1.5"/><rect x="4.5" y="13.5" width="1.6" height="1.5"/><rect x="9" y="0" width="1.6" height="1.5"/><rect x="9" y="4.5" width="1.6" height="1.5"/><rect x="9" y="9" width="1.6" height="1.5"/><rect x="9" y="13.5" width="1.6" height="1.5"/><rect x="14" y="0" width="1.6" height="1.5"/><rect x="14" y="4.5" width="1.6" height="1.5"/><rect x="14" y="9" width="1.6" height="1.5"/><rect x="14" y="13.5" width="1.6" height="1.5"/><rect x="2.5" y="2.5" width="1" height="1"/><rect x="2.5" y="7" width="1" height="1"/><rect x="2.5" y="11.5" width="1" height="1"/><rect x="7" y="2.5" width="1" height="1"/><rect x="7" y="7" width="1" height="1"/><rect x="7" y="11.5" width="1" height="1"/><rect x="12" y="2.5" width="1" height="1"/><rect x="12" y="7" width="1" height="1"/><rect x="12" y="11.5" width="1" height="1"/></g></svg>
<svg style="position:absolute;left:474px;top:836px" width="18" height="17" viewBox="0 0 18 17">
<line x1="0" y1="15.5" x2="16" y2="15.5" stroke="#111" stroke-width="1.4"/>
<line x1="6.5" y1="15" x2="14" y2="7.5" stroke="#111" stroke-width="1.3"/>
<rect x="5.0" y="13.5" width="3.0" height="3.0" fill="#2a8cff" stroke="#1a3fd0" stroke-width="0.6" rx="0.6"/><rect x="12.5" y="6.0" width="3.0" height="3.0" fill="#2a8cff" stroke="#1a3fd0" stroke-width="0.6" rx="0.6"/>
<path d="M4.8,9.2 H7.6 L5,12.3 H7.8" fill="none" stroke="#ff0000" stroke-width="1.2"/>
<path d="M12.2,1.5 H15 L12.5,4.7 H15.3" fill="none" stroke="#ff0000" stroke-width="1.2"/>
</svg>
<svg style="position:absolute;left:529px;top:838px" width="16" height="16" viewBox="0 0 16 16">
<line x1="2" y1="14" x2="13.5" y2="2.5" stroke="#111" stroke-width="3.2"/>
<line x1="2" y1="14" x2="13.5" y2="2.5" stroke="#777" stroke-width="0.8" stroke-dasharray="0.8,0.8"/>
<rect x="0.6000000000000003" y="12.200000000000001" width="3.1999999999999997" height="3.1999999999999997" fill="#2a8cff" stroke="#1a3fd0" stroke-width="0.6" rx="0.6"/><rect x="11.700000000000001" y="1.1000000000000003" width="3.1999999999999997" height="3.1999999999999997" fill="#2a8cff" stroke="#1a3fd0" stroke-width="0.6" rx="0.6"/>
</svg>
<svg style="position:absolute;left:553px;top:835px" width="25" height="25" viewBox="0 0 25 25">
<line x1="5" y1="17" x2="16" y2="6" stroke="#111" stroke-width="1"/>
<path d="M12,9 L14,11 L17,12" fill="none" stroke="#111" stroke-width="1"/>
<rect x="2.6" y="14" width="5.6" height="5.6" fill="none" stroke="#ffff00" stroke-width="1.2"/>
<rect x="13.6" y="3.2" width="5.6" height="5.6" fill="none" stroke="#ffff00" stroke-width="1.2"/>
<rect x="4.3" y="15.700000000000001" width="2.1999999999999997" height="2.1999999999999997" fill="#2a8cff" stroke="#1a3fd0" stroke-width="0.6" rx="0.6"/><rect x="15.299999999999999" y="4.8999999999999995" width="2.1999999999999997" height="2.1999999999999997" fill="#2a8cff" stroke="#1a3fd0" stroke-width="0.6" rx="0.6"/><rect x="9.100000000000001" y="11.600000000000001" width="1.7999999999999998" height="1.7999999999999998" fill="#2a8cff" stroke="#1a3fd0" stroke-width="0.6" rx="0.6"/><rect x="14.1" y="14.5" width="2.1999999999999997" height="2.1999999999999997" fill="#2a8cff" stroke="#1a3fd0" stroke-width="0.6" rx="0.6"/>
<path d="M8.5,8 V14.5 H15" fill="none" stroke="#ffff00" stroke-width="1.1"/>
<circle cx="10.5" cy="13" r="1.8" fill="none" stroke="#ffff00" stroke-width="1"/>
</svg>
<svg style="position:absolute;left:580px;top:835px" width="25" height="25" viewBox="0 0 25 25">
<line x1="4.5" y1="18" x2="14.5" y2="7" stroke="#111" stroke-width="1"/>
<line x1="14.5" y1="7" x2="17.5" y2="4" stroke="#111" stroke-width="1"/>
<line x1="14.5" y1="7" x2="17" y2="11" stroke="#111" stroke-width="1"/>
<rect x="3.3" y="16.8" width="2.4" height="2.4" fill="#2a8cff" stroke="#1a3fd0" stroke-width="0.6" rx="0.6"/><rect x="12.600000000000001" y="5.6" width="2.8" height="2.8" fill="#2a8cff" stroke="#1a3fd0" stroke-width="0.6" rx="0.6"/><rect x="16.8" y="3.3" width="2.4" height="2.4" fill="#2a8cff" stroke="#1a3fd0" stroke-width="0.6" rx="0.6"/><rect x="16.2" y="10.200000000000001" width="2.6" height="2.6" fill="#2a8cff" stroke="#1a3fd0" stroke-width="0.6" rx="0.6"/>
</svg>
<div class="t" style="left:493.00px;top:18.00px;font-size:17px;line-height:17px;color:#eff0f1;transform:scaleX(0.7094)">ZCad v0.9.8 Revision SVN:Unknown - [Без имени001]</div>
<div class="t" style="left:21.00px;top:52.00px;font-size:17px;line-height:17px;color:#31363b;transform:scaleX(0.7635)">Файл</div>
<div class="t" style="left:76.27px;top:52.00px;font-size:17px;line-height:17px;color:#31363b;transform:scaleX(0.7342)">Правка</div>
<div class="t" style="left:144.23px;top:52.00px;font-size:17px;line-height:17px;color:#31363b;transform:scaleX(0.7696)">Вид</div>
<div class="t" style="left:191.00px;top:52.00px;font-size:17px;line-height:17px;color:#31363b;transform:scaleX(0.7622)">Формат</div>
<div class="t" style="left:261.74px;top:52.00px;font-size:17px;line-height:17px;color:#31363b;transform:scaleX(0.7616)">Черчение</div>
<div class="t" style="left:346.25px;top:52.00px;font-size:17px;line-height:17px;color:#31363b;transform:scaleX(0.7541)">Dimension</div>
<div class="t" style="left:434.24px;top:52.00px;font-size:17px;line-height:17px;color:#31363b;transform:scaleX(0.7606)">Изменить</div>
<div class="t" style="left:519.00px;top:52.00px;font-size:17px;line-height:17px;color:#31363b;transform:scaleX(0.6998)">Схема</div>
<div class="t" style="left:579.25px;top:52.00px;font-size:17px;line-height:17px;color:#31363b;transform:scaleX(0.7513)">План</div>
<div class="t" style="left:633.25px;top:52.00px;font-size:17px;line-height:17px;color:#31363b;transform:scaleX(0.7508)">Информация</div>
<div class="t" style="left:739.23px;top:52.00px;font-size:17px;line-height:17px;color:#31363b;transform:scaleX(0.7673)">Модель</div>
<div class="t" style="left:811.27px;top:52.00px;font-size:17px;line-height:17px;color:#31363b;transform:scaleX(0.7344)">Настройка</div>
<div class="t" style="left:900.50px;top:52.00px;font-size:17px;line-height:17px;color:#31363b;transform:scaleX(0.7729)">Окно</div>
<div class="t" style="left:954.50px;top:52.00px;font-size:17px;line-height:17px;color:#31363b;transform:scaleX(0.7169)">Справка</div>
<div class="t" style="left:1029.00px;top:52.00px;font-size:17px;line-height:17px;color:#31363b;transform:scaleX(0.7187)">Отладка</div>
<div class="t" style="left:1103.27px;top:52.00px;font-size:17px;line-height:17px;color:#31363b;transform:scaleX(0.7303)">DB</div>
<div class="t" style="left:228.30px;top:87.00px;font-size:17px;line-height:17px;color:#31363b;transform:scaleX(0.7111)">0</div>
<div class="t" style="left:428.99px;top:87.00px;font-size:17px;line-height:17px;color:#31363b;transform:scaleX(0.7134)">ByLayer</div>
<div class="t" style="left:544.28px;top:87.00px;font-size:17px;line-height:17px;color:#31363b;transform:scaleX(0.7238)">ByLayer</div>
<div class="t" style="left:800.09px;top:87.00px;font-size:17px;line-height:17px;color:#31363b;transform:scaleX(0.7075)">ByLayer</div>
<div class="t" style="left:932.50px;top:87.00px;font-size:17px;line-height:17px;color:#31363b;transform:scaleX(0.7281)">Standard</div>
<div class="t" style="left:1064.02px;top:87.00px;font-size:17px;line-height:17px;color:#31363b;transform:scaleX(0.6794)">ISO-25</div>
<div class="t" style="left:161.01px;top:128.00px;font-size:17px;line-height:17px;color:#31363b;transform:scaleX(0.6875)">1</div>
<div class="t" style="left:183.00px;top:128.00px;font-size:17px;line-height:17px;color:#31363b;transform:scaleX(0.6556)">SN</div>
<div class="t" style="left:108.00px;top:158.30px;font-size:17px;line-height:17px;color:#31363b;transform:scaleX(0.7288)">Object inspector</div>
<div class="t" style="left:59.25px;top:187.00px;font-size:17px;line-height:17px;color:#31363b;transform:scaleX(0.7236)">Свойство</div>
<div class="t" style="left:203.50px;top:187.00px;font-size:17px;line-height:17px;color:#31363b;transform:scaleX(0.7476)">Значение</div>
<div class="t" style="left:27.74px;top:214.00px;font-size:17px;line-height:17px;color:#31363b;transform:scaleX(0.7594)">Пути</div>
<div class="t" style="left:27.75px;top:247.00px;font-size:17px;line-height:17px;color:#31363b;transform:scaleX(0.7491)">Рендер</div>
<div class="t" style="left:27.82px;top:280.00px;font-size:17px;line-height:17px;color:#31363b;transform:scaleX(0.6822)">DISP</div>
<div class="t" style="left:28.50px;top:313.00px;font-size:17px;line-height:17px;color:#31363b;transform:scaleX(0.6986)">Система</div>
<div class="t" style="left:28.50px;top:346.00px;font-size:17px;line-height:17px;color:#31363b;transform:scaleX(0.7308)">Сохранение</div>
<div class="t" style="left:27.74px;top:379.00px;font-size:17px;line-height:17px;color:#31363b;transform:scaleX(0.7580)">Черчение</div>
<div class="t" style="left:27.74px;top:412.00px;font-size:17px;line-height:17px;color:#31363b;transform:scaleX(0.7631)">Проектирование</div>
<div class="t" style="left:27.77px;top:445.00px;font-size:17px;line-height:17px;color:#31363b;transform:scaleX(0.7275)">Интерфейс</div>
<div class="t" style="left:28.50px;top:478.00px;font-size:17px;line-height:17px;color:#31363b;transform:scaleX(0.7201)">Отладка</div>
<div class="t" style="left:330.00px;top:453.30px;font-size:17px;line-height:17px;color:#31363b;transform-origin:1px 14px;transform:rotate(-90deg) scaleX(0.7281)">Drawings window</div>
<div class="t" style="left:345.27px;top:162.70px;font-size:17px;line-height:17px;color:#31363b;transform:scaleX(0.7322)">Без имени001</div>
<div class="t" style="left:354.80px;top:771.00px;font-size:17px;line-height:17px;color:#31363b;transform:scaleX(0.7221)">Command&gt;</div>
<div class="t" style="left:331.00px;top:763.70px;font-size:17px;line-height:17px;color:#31363b;transform-origin:0px 14px;transform:rotate(-90deg) scaleX(0.7399)">Command line</div>
<div class="t" style="left:113.50px;top:800.50px;font-size:17px;line-height:17px;color:#31363b;transform:scaleX(0.6456)">c+c</div>
<div class="t" style="left:140.40px;top:800.50px;font-size:17px;line-height:17px;color:#31363b;transform:scaleX(0.6933)">csel</div>
<div class="t" style="left:170.83px;top:800.50px;font-size:17px;line-height:17px;color:#31363b;transform:scaleX(0.7705)">inv</div>
<div class="t" style="left:197.75px;top:800.50px;font-size:17px;line-height:17px;color:#31363b;transform:scaleX(0.7528)">КЖ</div>
<div class="t" style="left:226.20px;top:800.50px;font-size:17px;line-height:17px;color:#31363b;transform:scaleX(0.7971)">ВМ</div>
<div class="t" style="left:284.50px;top:800.50px;font-size:17px;line-height:17px;color:#31363b;transform:scaleX(0.6546)">++</div>
<div class="t" style="left:309.22px;top:800.50px;font-size:17px;line-height:17px;color:#31363b;transform:scaleX(0.7812)">D()</div>
<div class="t" style="left:337.30px;top:800.50px;font-size:17px;line-height:17px;color:#31363b;transform:scaleX(0.6443)">ASL</div>
<div class="t" style="left:129.00px;top:838.60px;font-size:17px;line-height:17px;color:#31363b;transform:scaleX(0.6887)">721.1257, 304.1349, 0.0000</div>
<div class="t" style="left:502.90px;top:838.60px;font-size:17px;line-height:17px;color:#31363b;transform:scaleX(0.6281)">+G</div>
<div class="t" style="left:610.40px;top:838.60px;font-size:17px;line-height:17px;color:#31363b;transform:scaleX(0.6656)">AG</div>
<div class="t" style="left:637.20px;top:838.60px;font-size:17px;line-height:17px;color:#31363b;transform:scaleX(0.6081)">SG</div>
<div class="t" style="left:1111.30px;top:838.80px;font-size:17px;line-height:17px;color:#31363b;transform:scaleX(0.7775)">defaultlayout</div>
</body></html>
